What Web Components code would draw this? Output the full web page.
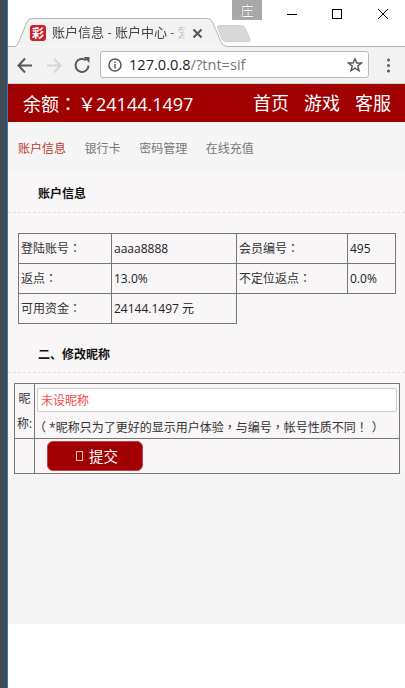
<!DOCTYPE html>
<html lang="zh-CN"><head><meta charset="utf-8"><title>账户信息</title>
<style>
html,body{margin:0;padding:0;background:#fff}
body{width:405px;height:688px;overflow:hidden;font-family:"Open Sans","Noto Sans CJK SC",sans-serif;display:flex}
</style></head><body>
<app-shell>
  <browser-chrome></browser-chrome>
  <site-header></site-header>
  <sub-nav></sub-nav>
  <account-panel></account-panel>
  <page-rest></page-rest>
</app-shell>
<script>
const P='font-family:\'Noto Sans CJK TC\',sans-serif';
function def(name,html){customElements.define(name,class extends HTMLElement{constructor(){super();this.attachShadow({mode:'open'}).innerHTML=html}})}
def('app-shell',`<style>
:host{display:flex;width:405px;height:688px}
.edge{width:7px;background:#424c54;border-right:1px solid #1f7fc8;flex:none}
.main{width:397px;display:flex;flex-direction:column}
</style><div class="edge"></div><div class="main"><slot></slot></div>`);
def('page-rest',`<style>:host{display:block;flex:none;height:150px;background:#f5f5f5}</style>`);
def('browser-chrome',`<style>
:host{display:block;flex:none;height:84px;font-family:"Open Sans","Noto Sans CJK SC",sans-serif}
svg{display:block}
.strip{height:47px;position:relative;background:#fff}
.title{position:absolute;left:44px;top:24px;height:16px;white-space:nowrap;font:13px/16px "Open Sans","Noto Sans CJK SC",sans-serif;color:#444;-webkit-mask-image:linear-gradient(90deg,#000 118px,transparent 134px)}
.ime{position:absolute;left:224px;top:0;width:30px;height:20px;background:#a8a8a8;color:#fff;font:13px/20px "Noto Sans CJK SC",sans-serif;text-align:center;text-shadow:0 0 1px #555}
.fav{position:absolute;left:22px;top:25px;width:16px;height:16px;border-radius:3px;background:#c8202e;color:#fff;font:bold 12px/15px "Noto Sans CJK SC",sans-serif;text-align:center}
.bar{height:37px;box-sizing:border-box;background:#f2f2f2;border-bottom:1px solid #d0d0d0;position:relative}
.url{position:absolute;left:92px;top:4px;width:269px;height:27px;box-sizing:border-box;background:#fff;border:1px solid #b9b9b9;border-radius:3px;display:flex;align-items:center;padding-left:28px;font:14.6px/25px "Open Sans",sans-serif;color:#222}
.url span{color:#777}
.abs{position:absolute}
</style>
<div class="strip">
<svg class="abs" style="left:0;top:0" width="397" height="47" viewBox="0 0 397 47">
<path d="M0 46.500H6C8 46.500 9 45.500 10 43.500L19 22Q20 18.500 24 18.500H199Q203 18.500 204.500 22L213 42Q215 46.500 219 46.500H397" fill="#f2f2f2" stroke="#b4b4b4"/>
<path d="M209.500 27.500Q209 25.500 211 25.500H233Q236 25.500 237 28L242 39Q243 41.500 240 41.500H218Q215 41.500 214 39Z" fill="#d8d8d8" stroke="#cfcfcf"/>
<path d="M185.500 29.500L193.500 37.500M193.500 29.500L185.500 37.500" stroke="#555" stroke-width="2"/>
<path d="M279 14.500H289" stroke="#000" stroke-width="1"/>
<rect x="324.500" y="9.500" width="9" height="9" fill="none" stroke="#000"/>
<path d="M370 9L380 19M380 9L370 19" stroke="#000" stroke-width="1" fill="none"/>
</svg>
<div class="fav">彩</div>
<div class="title">账户信息 - 账户中心 - 爱</div>
<div class="ime">庄</div>
</div>
<div class="bar">
<svg class="abs" style="left:0;top:0" width="397" height="36" viewBox="0 0 397 36">
<path d="M24 18.500H11M17 11.500L10.500 18.500L17 25.500" stroke="#5a5a5a" stroke-width="2" fill="none"/>
<path d="M39 18.500H52M46 11.500L52.500 18.500L46 25.500" stroke="#d6d6d6" stroke-width="2" fill="none"/>
<path d="M80.500 18.500A6.500 6.500 0 1 1 78 13.300" stroke="#5a5a5a" stroke-width="2" fill="none"/>
<path d="M75.500 10H81.500V16Z" fill="#5a5a5a"/>
<g fill="#5a5a5a"><circle cx="380.500" cy="13" r="1.500"/><circle cx="380.500" cy="18.500" r="1.500"/><circle cx="380.500" cy="24" r="1.500"/></g>
</svg>
<div class="url">127.0.0.8<span>/?tnt=sif</span>
<svg class="abs" style="left:6px;top:5px" width="16" height="16" viewBox="0 0 16 16"><circle cx="8" cy="8" r="6" fill="none" stroke="#555" stroke-width="1.500"/><path d="M8 7V11.500M8 4.500V6" stroke="#555" stroke-width="1.500"/></svg>
<svg class="abs" style="left:246px;top:5px" width="16" height="16" viewBox="0 0 16 16"><path d="M8 1.800L9.800 6H14.500L10.800 9L12 13.800L8 11.200L4 13.800L5.200 9L1.500 6H6.200Z" fill="none" stroke="#555" stroke-width="1.400"/></svg>
</div>
</div>`);
def('site-header',`<style>
:host{display:flex;flex:none;height:38px;background:#a00000;color:#fff;justify-content:space-between;align-items:center;padding:0 14px 0 15px;font:18px/38px "Open Sans","Noto Sans CJK SC",sans-serif}
nav{display:flex;gap:15px}
.p{${P}}
.y{margin-left:1px}
</style><div>余额<span class="p" lang="zh-TW">：</span><span class="y">￥</span>24144.1497</div><nav><span>首页</span><span>游戏</span><span>客服</span></nav>`);
def('sub-nav',`<style>
:host{display:flex;flex:none;height:51px;box-sizing:border-box;padding:1px 0 0 10px;background:#f5f5f5;gap:18.6px;align-items:center;font:12px/20px "Noto Sans CJK SC",sans-serif;color:#777}
.on{color:#c0392b}
</style><span class="on">账户信息</span><span>银行卡</span><span>密码管理</span><span>在线充值</span>`);
def('section-title',`<style>
:host{display:block;height:40px;box-sizing:border-box;padding-left:30px;font:bold 12px/39px "Noto Sans CJK SC",sans-serif;color:#111;border-bottom:1px dashed #e0dede}
</style><slot></slot>`);
def('info-table',`<style>
:host{display:block;margin:20px 0 0 10px}
table{border-collapse:collapse;table-layout:fixed;width:378px;font:12px/20px "Open Sans","Noto Sans CJK SC",sans-serif;color:#333}
td{border:1px solid #777;height:30px;padding:0 2px;white-space:nowrap;box-sizing:border-box}
td.v{color:#222}
.p{${P}}
</style><table>
<colgroup><col style="width:93px"><col style="width:125px"><col style="width:111px"><col style="width:48px"></colgroup>
<tr><td>登陆账号<span class="p" lang="zh-TW">：</span></td><td class="v">aaaa8888</td><td>会员编号<span class="p" lang="zh-TW">：</span></td><td class="v">495</td></tr>
<tr><td>返点<span class="p" lang="zh-TW">：</span></td><td class="v">13.0%</td><td>不定位返点<span class="p" lang="zh-TW">：</span></td><td class="v">0.0%</td></tr>
<tr><td>可用资金<span class="p" lang="zh-TW">：</span></td><td class="v">24144.1497 元</td></tr>
</table>`);
def('nick-form',`<style>
:host{display:block;margin:10px 0 0 6px}
table{border-collapse:collapse;table-layout:fixed;width:386px;font:12px/24px "Open Sans","Noto Sans CJK SC",sans-serif;color:#333}
td{border:1px solid #777;padding:0 2px;box-sizing:border-box}
.lab{text-align:center;padding:0 1px;line-height:25px}
.in{height:24px;box-sizing:border-box;border:1px solid #ccc;border-radius:2px;background:#fff;color:#f4484a;font:12px/22px "Noto Sans CJK SC",sans-serif;padding-left:3px}
.tip{display:block;white-space:nowrap;height:22px;font-size:12px}
.p{${P}}
.l,.r{display:inline-block}
.l{transform:translateX(-3px)}
.r{transform:translateX(4px)}
.row1{height:55px}.row2{height:35px}
.btn{margin-left:10px;width:96px;height:30px;box-sizing:border-box;border:1px solid #c9414a;border-radius:6px;background:#a00000;color:#fff;display:flex;align-items:center;gap:6px;font:14.500px/20px "Noto Sans CJK SC",sans-serif;padding-left:28px}
.tofu{width:7px;height:10px;border:1px solid #e8c9a0;box-sizing:border-box}
.cell{padding:3px 2px 1px}
</style><table>
<colgroup><col style="width:20px"><col></colgroup>
<tr class="row1"><td class="lab">昵称:</td><td class="cell"><div class="in">未设昵称</div><div class="tip" style="padding-top:3px"><span class="p l">（</span>*昵称只为了更好的显示用户体验<span class="p" lang="zh-TW">，</span>与编号<span class="p" lang="zh-TW">，</span>帐号性质不同<span class="p" lang="zh-TW">！</span><span class="r">）</span></div></td></tr>
<tr class="row2"><td></td><td><div class="btn"><span class="tofu"></span><span>提交</span></div></td></tr>
</table>`);
def('account-panel',`<style>
:host{display:block;flex:none;height:301px;background:#f8f6f7}
</style>
<section-title>账户信息</section-title>
<info-table></info-table>
<section-title style="margin-top:10px;height:39px">二、修改昵称</section-title>
<nick-form></nick-form>`);
</script>
</body></html>
